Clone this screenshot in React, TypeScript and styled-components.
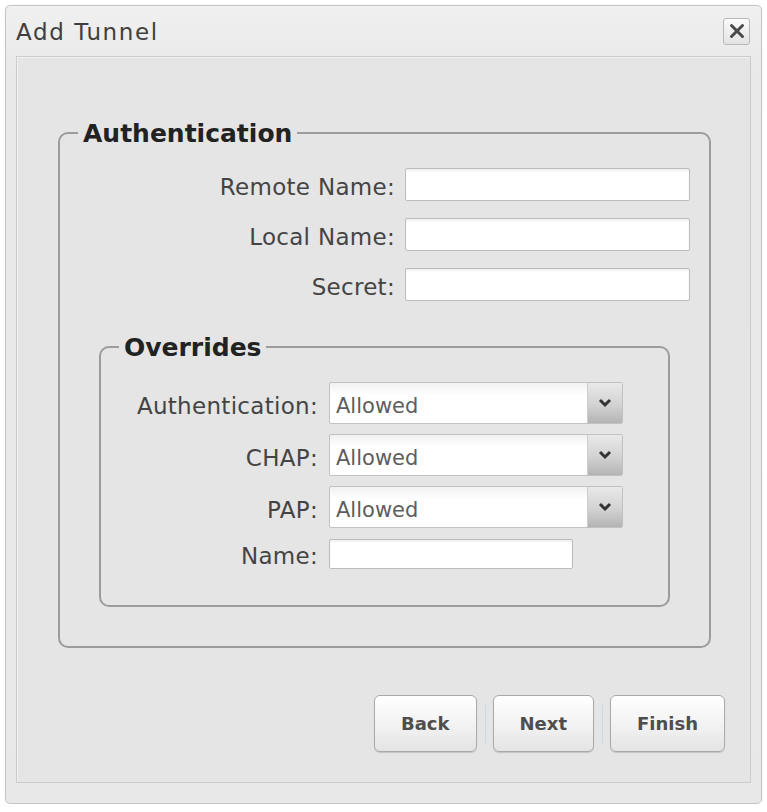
import styled, { createGlobalStyle } from "styled-components";

const GlobalStyle = createGlobalStyle`
	html, body {
		margin: 0;
		padding: 0;
		background: #ffffff;
	}
	body {
		font-family: "DejaVu Sans", Verdana, sans-serif;
	}
	* {
		box-sizing: border-box;
	}
`;

const Dialog = styled.div`
	display: flex;
	flex-direction: column;
	margin: 5px 5px 0 5px;
	width: 757px;
	height: 799px;
	padding: 0 10px 20px 10px;
	border: 1px solid #c4c4c4;
	border-radius: 5px;
	background: linear-gradient(180deg, #f0f0f0 0%, #e9e9e9 8%, #e8e8e8 100%);
	box-shadow: 0 0 2px rgba(0, 0, 0, 0.08);
`;

const TitleBar = styled.div`
	display: flex;
	align-items: center;
	justify-content: space-between;
	height: 50px;
	flex-shrink: 0;
`;

const Title = styled.h1`
	margin: 0;
	padding-top: 2px;
	font-size: 23px;
	font-weight: normal;
	letter-spacing: 1.6px;
	color: #3f3f3f;
`;

const CloseButton = styled.button`
	display: flex;
	align-items: center;
	justify-content: center;
	width: 27px;
	height: 27px;
	margin-right: 1px;
	padding: 0;
	border: 1px solid #b8b8b8;
	border-radius: 3px;
	background: linear-gradient(180deg, #fbfbfb, #e2e2e2);
	cursor: pointer;
`;

const Panel = styled.div`
	flex: 1;
	display: flex;
	flex-direction: column;
	padding: 60px 0 30px 0;
	border: 1px solid #cbcbcb;
	background: #e5e5e5;
	box-shadow: inset 1px 1px 0 #f2f2f2;
`;

const Group = styled.fieldset<{ $inset?: string; $bottom: number }>`
	margin: ${(p) => p.$inset || "0"};
	padding: 0 0 ${(p) => p.$bottom}px 0;
	border: 2px solid #9c9c9c;
	border-radius: 10px;
	min-width: 0;
`;

const Legend = styled.legend`
	margin-left: 18px;
	padding: 3px 5px 0 5px;
	font-size: 25px;
	line-height: 28px;
	font-weight: bold;
	color: #222;
`;

const FormGrid = styled.div<{ $field: number; $right: number; $top: number; $gap: number; $col: number }>`
	display: grid;
	grid-template-columns: 1fr ${(p) => p.$field}px;
	column-gap: ${(p) => p.$col}px;
	row-gap: ${(p) => p.$gap}px;
	align-items: center;
	padding: ${(p) => p.$top}px ${(p) => p.$right}px 0 0;
`;

const Label = styled.label`
	justify-self: end;
	font-size: 23px;
	letter-spacing: 0.3px;
	color: #444;
	white-space: nowrap;
	padding-top: 5px;
`;

const TextInput = styled.input<{ $width?: number; $height: number }>`
	width: ${(p) => (p.$width ? `${p.$width}px` : "100%")};
	height: ${(p) => p.$height}px;
	margin: 0;
	padding: 0 6px;
	border: 1px solid #bcbcbc;
	border-radius: 2px;
	background: #ffffff;
	box-shadow: inset 0 2px 2px rgba(0, 0, 0, 0.06);
	font-family: inherit;
	font-size: 20px;
	outline: none;
`;

const SelectBox = styled.div`
	display: flex;
	height: 42px;
	border: 1px solid #c2c2c2;
	border-radius: 2px;
	background: linear-gradient(180deg, #f1f1f1 0%, #ffffff 30%, #ffffff 100%);
	overflow: hidden;
`;

const Select = styled.select`
	flex: 1;
	min-width: 0;
	margin: 0;
	padding: 5px 0 0 6px;
	border: none;
	background: transparent;
	appearance: none;
	font-family: inherit;
	font-size: 21px;
	color: #5e5e5e;
	outline: none;
`;

const ArrowBox = styled.span`
	display: flex;
	align-items: center;
	justify-content: center;
	width: 35px;
	border-left: 1px solid #cdcdcd;
	background: linear-gradient(180deg, #e9e9e9 0%, #d2d2d2 55%, #b4b4b4 100%);
`;

const ButtonRow = styled.div`
	display: flex;
	align-items: center;
	justify-content: flex-end;
	margin-top: auto;
	padding-right: 25px;
`;

const Button = styled.button`
	height: 57px;
	min-width: 100px;
	padding: 0 26px;
	border: 1px solid #a9a9a9;
	border-radius: 6px;
	background: linear-gradient(180deg, #ffffff 0%, #f3f3f3 50%, #e4e4e4 100%);
	box-shadow: 0 1px 1px rgba(0, 0, 0, 0.15);
	font-family: inherit;
	font-size: 18px;
	font-weight: bold;
	color: #4e4e4e;
	cursor: pointer;
`;

const Separator = styled.span`
	width: 1px;
	height: 38px;
	margin: 0 7px 0 8px;
	background: #c9d9e6;
`;

function Chevron() {
	return (
		<svg width="14" height="10" viewBox="0 0 14 10">
			<polyline points="2,2 7,7 12,2" fill="none" stroke="#333" strokeWidth="3" />
		</svg>
	);
}

function CloseIcon() {
	return (
		<svg width="16" height="16" viewBox="0 0 16 16">
			<path d="M2.5 2.5 L13.5 13.5 M13.5 2.5 L2.5 13.5" stroke="#4a4a4a" strokeWidth="3" strokeLinecap="round" />
		</svg>
	);
}

const overrides = ["Authentication", "CHAP", "PAP"];

function App() {
	return (
		<>
			<GlobalStyle />
			<Dialog>
				<TitleBar>
					<Title>Add Tunnel</Title>
					<CloseButton aria-label="Close">
						<CloseIcon />
					</CloseButton>
				</TitleBar>
				<Panel>
					<Group $inset="0 39px 0 41px" $bottom={39}>
						<Legend>Authentication</Legend>
						<FormGrid $field={285} $right={19} $top={20} $gap={17} $col={10}>
							<Label>Remote Name:</Label>
							<TextInput $height={33} />
							<Label>Local Name:</Label>
							<TextInput $height={33} />
							<Label>Secret:</Label>
							<TextInput $height={33} type="password" />
						</FormGrid>
						<Group $inset="30px 39px 0 39px" $bottom={36}>
							<Legend>Overrides</Legend>
							<FormGrid $field={294} $right={45} $top={20} $gap={10} $col={11}>
								{overrides.map((name) => (
									<>
										<Label key={name + "-l"}>{name}:</Label>
										<SelectBox key={name + "-s"}>
											<Select defaultValue="Allowed">
												<option>Allowed</option>
												<option>Required</option>
												<option>Refused</option>
											</Select>
											<ArrowBox>
												<Chevron />
											</ArrowBox>
										</SelectBox>
									</>
								))}
								<Label>Name:</Label>
								<TextInput $height={30} $width={244} />
							</FormGrid>
						</Group>
					</Group>
					<ButtonRow>
						<Button>Back</Button>
						<Separator />
						<Button>Next</Button>
						<Separator />
						<Button>Finish</Button>
					</ButtonRow>
				</Panel>
			</Dialog>
		</>
	);
}

export default App;
